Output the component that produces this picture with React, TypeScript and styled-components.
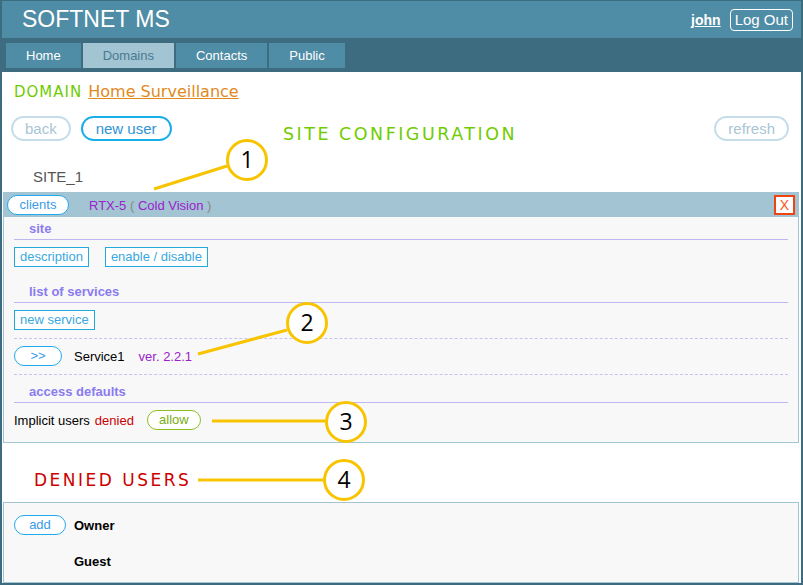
import React from "react"
import styled, { createGlobalStyle } from "styled-components"

const GlobalStyle = createGlobalStyle`
  html, body {
    margin: 0;
    padding: 0;
    background: #fff;
  }
  body {
    font-family: "Liberation Sans", Arial, sans-serif;
    font-size: 13px;
    color: #000;
  }
`

const Frame = styled.div`
  position: relative;
  box-sizing: border-box;
  width: 803px;
  height: 585px;
  border: 2px solid #3d6b7f;
  border-top-width: 1px;
  overflow: hidden;
  background: #fff;
`

const TopBar = styled.div`
  height: 37px;
  background: #4f8ca6;
  display: flex;
  align-items: center;
  justify-content: space-between;
  padding: 0 8px 0 20px;
`

const Brand = styled.div`
  color: #fff;
  font-size: 23px;
  line-height: 37px;
`

const UserBox = styled.div`
  display: flex;
  align-items: center;
  gap: 9px;
`

const UserName = styled.a`
  color: #fff;
  font-weight: bold;
  font-size: 14px;
  text-decoration: underline;
`

const LogOut = styled.button`
  box-sizing: border-box;
  height: 22px;
  padding: 0 4px;
  border: 1px solid #fff;
  border-radius: 4px;
  background: transparent;
  color: #fff;
  font-family: inherit;
  font-size: 15px;
  line-height: 20px;
`

const Nav = styled.nav`
  height: 34px;
  box-sizing: border-box;
  background: #3d6b7f;
  display: flex;
  gap: 2px;
  padding: 5px 0 0 4px;
`

const Tab = styled.div<{ $active?: boolean }>`
  height: 25px;
  line-height: 25px;
  padding: 0 20px;
  font-size: 13px;
  background: ${p => (p.$active ? "#a2c4d3" : "#4f8ca6")};
  color: ${p => (p.$active ? "#4a7a8e" : "#fff")};
`

const DomainRow = styled.div`
  margin: 10px 0 0 12px;
  line-height: 20px;
  display: flex;
  align-items: baseline;
`

const DomainTag = styled.span`
  font-family: "DejaVu Sans", Verdana, sans-serif;
  font-size: 15px;
  letter-spacing: 1px;
  color: #6fcc00;
  margin-right: 6px;
`

const DomainLink = styled.a`
  font-family: "DejaVu Sans", Verdana, sans-serif;
  font-size: 16px;
  color: #e08a1e;
  text-decoration: underline;
`

const ActionsRow = styled.div`
  margin-top: 14px;
  height: 25px;
  display: grid;
  grid-template-columns: 1fr auto 1fr;
  padding: 0 12px 0 9px;
`

const ActionsLeft = styled.div`
  display: flex;
  gap: 10px;
`

const ActionsRight = styled.div`
  display: flex;
  justify-content: flex-end;
`

const BigPill = styled.button<{ $disabled?: boolean }>`
  box-sizing: border-box;
  height: 25px;
  padding: 0 ${p => (p.$disabled ? 12 : 13)}px;
  border: 2px solid ${p => (p.$disabled ? "#c6dde9" : "#1aaee8")};
  border-radius: 13px;
  background: #fff;
  color: ${p => (p.$disabled ? "#a9c5d5" : "#2f95d6")};
  font-family: inherit;
  font-size: 15px;
  line-height: 21px;
`

const PageTitle = styled.h2<{ $color: string; $spacing: number }>`
  margin: 0;
  font-family: "DejaVu Sans", Verdana, sans-serif;
  font-weight: normal;
  font-size: 17px;
  letter-spacing: ${p => p.$spacing}px;
  color: ${p => p.$color};
`

const SiteTitle = styled(PageTitle)`
  padding-top: 11px;
  line-height: 14px;
  font-size: 17.5px;
`

const DeniedTitle = styled(PageTitle)`
  margin: 25px 0 10px 32px;
  line-height: 24px;
`

const SiteName = styled.div`
  margin: 26px 0 5px 31px;
  line-height: 20px;
  font-size: 15px;
  color: #555;
`

const Panel = styled.section`
  margin: 0 2px 0 1px;
  border: 1px solid #a2c4d3;
  background: #f8f8f8;
`

const PanelHeader = styled.div`
  height: 24px;
  background: #a2c4d3;
  display: flex;
  align-items: center;
  padding: 0 3px;
`

const Device = styled.span`
  margin-left: 20px;
  color: #9a22cc;
  font-size: 13px;
`

const Paren = styled.span`
  color: #888;
`

const CloseButton = styled.button`
  margin-left: auto;
  box-sizing: border-box;
  width: 21px;
  height: 20px;
  padding: 0;
  border: 2px solid #ee4411;
  background: #fff;
  color: #ff5522;
  font-family: inherit;
  font-size: 14px;
  line-height: 16px;
`

const PanelBody = styled.div`
  padding: 0 10px 12px;
`

const SectionLabel = styled.div<{ $top: number }>`
  margin-top: ${p => p.$top}px;
  padding: 4px 0 2px 15px;
  line-height: 16px;
  border-bottom: 1px solid #bdb8f0;
  font-weight: bold;
  font-size: 13px;
  color: #8a7cf0;
`

const Row = styled.div`
  margin-top: 7px;
  height: 20px;
  display: flex;
  align-items: center;
`

const ButtonRow = styled(Row)`
  gap: 16px;
`

const Dashed = styled.div`
  margin-top: 8px;
  border-top: 1px dashed #c8c2f2;
`

const RectButton = styled.button`
  box-sizing: border-box;
  height: 20px;
  padding: 0 5px;
  border: 1px solid #22aadd;
  background: #fff;
  color: #3aa8e0;
  font-family: inherit;
  font-size: 13px;
  line-height: 18px;
`

const Pill = styled.button<{ $w: number; $green?: boolean }>`
  box-sizing: border-box;
  width: ${p => p.$w}px;
  height: 20px;
  padding: 0;
  border: 1px solid ${p => (p.$green ? "#8cbf22" : "#22aaee")};
  border-radius: 10px;
  background: #fff;
  color: ${p => (p.$green ? "#7aad11" : "#3a9be8")};
  font-family: inherit;
  font-size: 13px;
  line-height: 18px;
`

const Text = styled.span<{ $color?: string; $gap?: number; $bold?: boolean }>`
  margin-left: ${p => p.$gap ?? 0}px;
  color: ${p => p.$color ?? "#000"};
  font-weight: ${p => (p.$bold ? "bold" : "normal")};
  font-size: 13px;
`

const UsersPanel = styled(Panel)`
  display: grid;
  grid-template-columns: 60px auto;
  grid-auto-rows: 20px;
  row-gap: 16px;
  align-items: center;
  padding: 12px 10px 11px;
`

const Overlay = styled.svg`
  position: absolute;
  top: -1px;
  left: -2px;
  pointer-events: none;
`

const CallText = styled.text`
  font-family: "Open Sans", "Liberation Sans", sans-serif;
  font-size: 23px;
  fill: #000;
`

const callouts = [
  { n: "1", cx: 247, cy: 160, x1: 154, y1: 189, x2: 227, y2: 166 },
  { n: "2", cx: 307, cy: 323, x1: 198, y1: 354, x2: 287, y2: 330 },
  { n: "3", cx: 346, cy: 422, x1: 212, y1: 421, x2: 325, y2: 421 },
  { n: "4", cx: 344, cy: 480, x1: 198, y1: 480, x2: 323, y2: 480 },
]

const Callouts = () => (
  <Overlay width={803} height={585} viewBox="0 0 803 585">
    {callouts.map(c => (
      <g key={c.n}>
        <line
          x1={c.x1}
          y1={c.y1}
          x2={c.x2}
          y2={c.y2}
          stroke="#f8c400"
          strokeWidth={3}
        />
        <circle
          cx={c.cx}
          cy={c.cy}
          r={19.5}
          fill="#fff"
          stroke="#f8c400"
          strokeWidth={3}
        />
        <CallText x={c.cx} y={c.cy + 8} textAnchor="middle">
          {c.n}
        </CallText>
      </g>
    ))}
  </Overlay>
)

export default function App() {
  return (
    <>
      <GlobalStyle />
      <Frame>
        <TopBar>
          <Brand>SOFTNET MS</Brand>
          <UserBox>
            <UserName>john</UserName>
            <LogOut>Log Out</LogOut>
          </UserBox>
        </TopBar>
        <Nav>
          <Tab>Home</Tab>
          <Tab $active>Domains</Tab>
          <Tab>Contacts</Tab>
          <Tab>Public</Tab>
        </Nav>

        <DomainRow>
          <DomainTag>DOMAIN</DomainTag>
          <DomainLink>Home Surveillance</DomainLink>
        </DomainRow>

        <ActionsRow>
          <ActionsLeft>
            <BigPill $disabled>back</BigPill>
            <BigPill>new user</BigPill>
          </ActionsLeft>
          <SiteTitle $color="#6fcc00" $spacing={2.5}>
            SITE CONFIGURATION
          </SiteTitle>
          <ActionsRight>
            <BigPill $disabled>refresh</BigPill>
          </ActionsRight>
        </ActionsRow>

        <SiteName>SITE_1</SiteName>

        <Panel>
          <PanelHeader>
            <Pill $w={62}>clients</Pill>
            <Device>
              RTX-5 <Paren>(</Paren> Cold Vision <Paren>)</Paren>
            </Device>
            <CloseButton>X</CloseButton>
          </PanelHeader>
          <PanelBody>
            <SectionLabel $top={0}>site</SectionLabel>
            <ButtonRow>
              <RectButton>description</RectButton>
              <RectButton>enable / disable</RectButton>
            </ButtonRow>

            <SectionLabel $top={13}>list of services</SectionLabel>
            <Row>
              <RectButton>new service</RectButton>
            </Row>
            <Dashed />
            <Row>
              <Pill $w={48}>&gt;&gt;</Pill>
              <Text $gap={12}>Service1</Text>
              <Text $gap={14} $color="#9a22cc">
                ver. 2.2.1
              </Text>
            </Row>
            <Dashed />

            <SectionLabel $top={5}>access defaults</SectionLabel>
            <Row>
              <Text>Implicit users</Text>
              <Text $gap={5} $color="#cc0000">
                denied
              </Text>
              <Text $gap={13}>
                <Pill $w={54} $green>
                  allow
                </Pill>
              </Text>
            </Row>
          </PanelBody>
        </Panel>

        <DeniedTitle $color="#cc0000" $spacing={2.5}>
          DENIED USERS
        </DeniedTitle>

        <UsersPanel>
          <Pill $w={52}>add</Pill>
          <Text $bold>Owner</Text>
          <span />
          <Text $bold>Guest</Text>
        </UsersPanel>

        <Callouts />
      </Frame>
    </>
  )
}
